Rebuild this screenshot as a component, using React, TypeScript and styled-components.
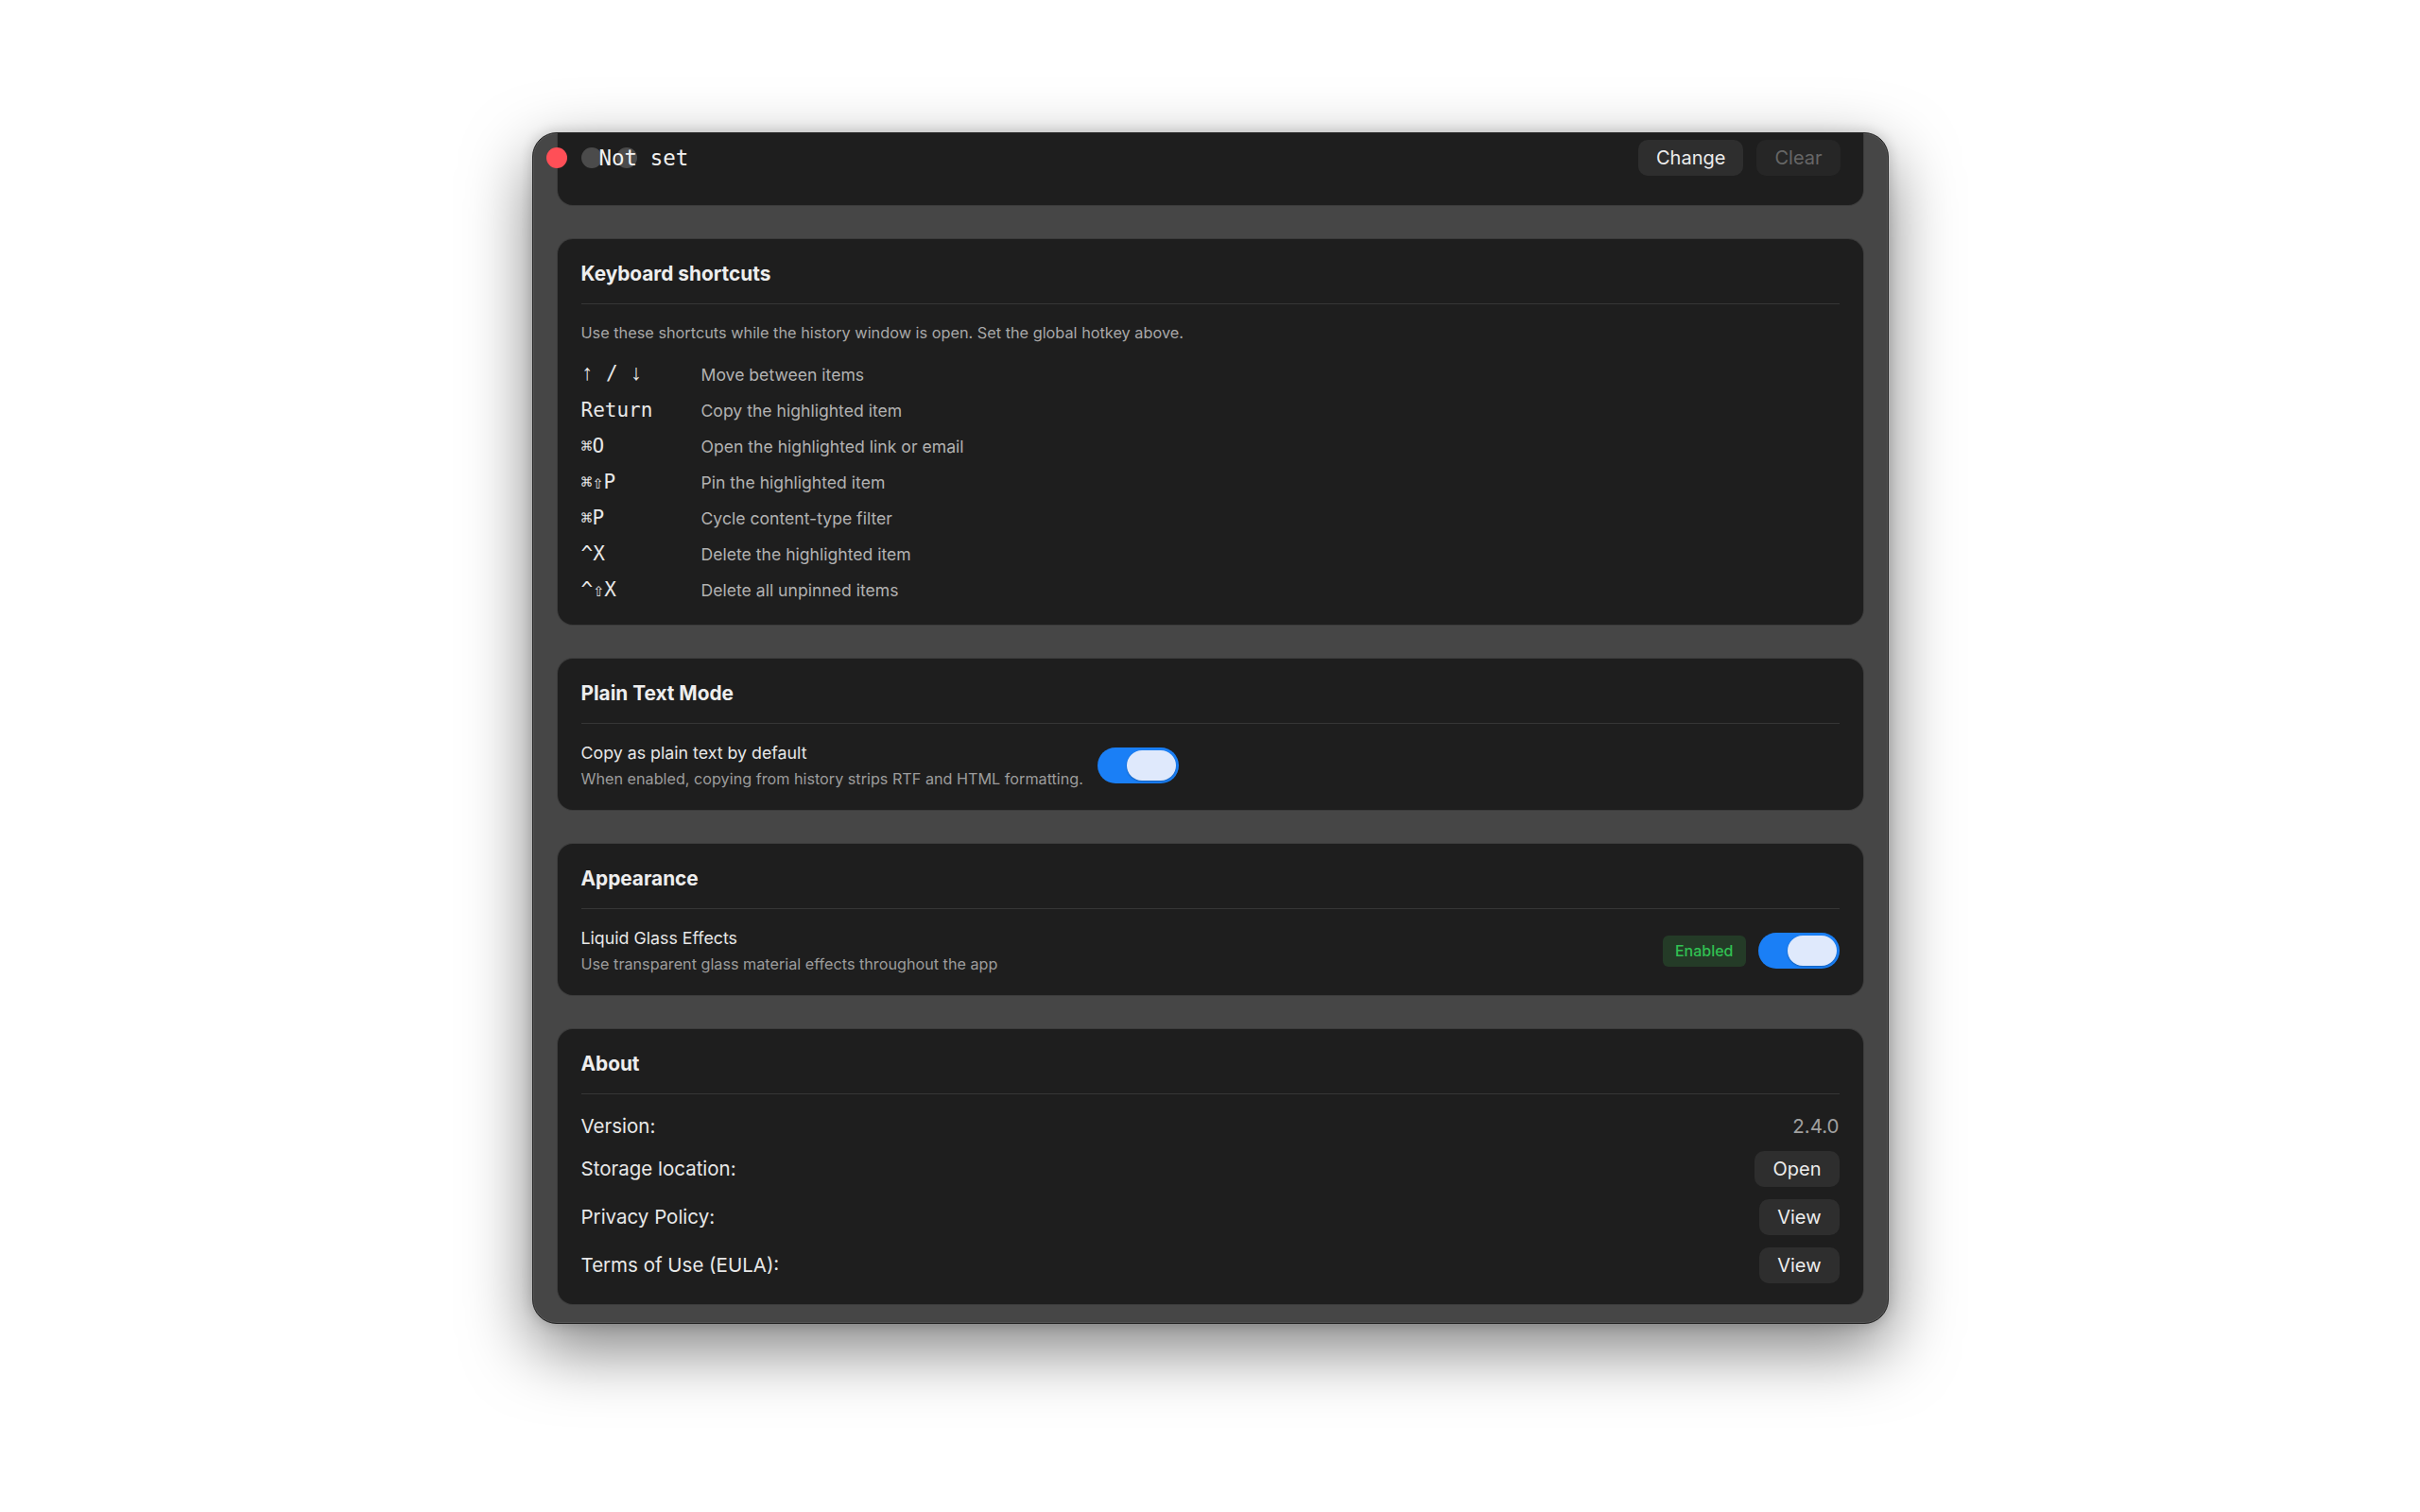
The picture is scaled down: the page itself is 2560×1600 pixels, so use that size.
import styled, { createGlobalStyle } from "styled-components";

const GlobalStyle = createGlobalStyle`
  html, body {
    margin: 0;
    padding: 0;
    background: #ffffff;
  }
  body {
    font-family: Inter, "Liberation Sans", sans-serif;
    -webkit-font-smoothing: antialiased;
  }
`;

const Page = styled.div`
  min-height: 1600px;
  box-sizing: border-box;
  display: flex;
  justify-content: center;
  align-items: flex-start;
  padding-top: 140px;
`;

const Window = styled.div`
  position: relative;
  width: 1435px;
  box-sizing: border-box;
  display: flex;
  flex-direction: column;
  gap: 36px;
  padding: 0 26px 20px;
  background: #464646;
  border: 1px solid #242424;
  border-radius: 26px;
  overflow: hidden;
  box-shadow: inset 0 0 0 1px rgba(255, 255, 255, 0.07),
    0 26px 70px rgba(0, 0, 0, 0.5), 0 0 14px rgba(0, 0, 0, 0.18);
`;

const TrafficLights = styled.div`
  position: absolute;
  top: 15px;
  left: 14px;
  display: flex;
  gap: 15px;
  z-index: 2;
`;

const Light = styled.div<{ $color: string }>`
  width: 22px;
  height: 22px;
  border-radius: 50%;
  background: ${(p) => p.$color};
`;

const Card = styled.section<{ $pb?: number }>`
  display: flex;
  flex-direction: column;
  padding: 24px 25px ${(p) => p.$pb ?? 22}px;
  background: #1e1e1e;
  border-radius: 16px;
  box-shadow: 0 0 0 1px rgba(0, 0, 0, 0.14);
`;

const HotkeyCard = styled(Card)`
  flex-direction: row;
  align-items: center;
  gap: 14px;
  padding: 7px 24px 31px 25px;
  border-radius: 0 0 16px 16px;
`;

const HotkeyValue = styled.div`
  flex: 1;
  margin-left: 19px;
  font: 400 22.5px/38px "DejaVu Sans Mono", "Liberation Mono", monospace;
  color: #f0f0f0;
`;

const Button = styled.button<{ $disabled?: boolean }>`
  height: 38px;
  padding: 0 19px;
  border: none;
  border-radius: 10px;
  background: ${(p) => (p.$disabled ? "#262626" : "#2e2e2e")};
  color: ${(p) => (p.$disabled ? "#666666" : "#ececec")};
  font: 400 20px Inter, "Liberation Sans", sans-serif;
  cursor: default;
`;

const CardTitle = styled.h2`
  margin: 0;
  font: 700 20.8px/26px Inter, "Liberation Sans", sans-serif;
  color: #eeeeee;
`;

const Divider = styled.div`
  height: 1px;
  margin-top: 18px;
  background: #363636;
`;

const Intro = styled.p`
  margin: 19px 0 0;
  font: 400 16.3px/22px Inter, "Liberation Sans", sans-serif;
  color: #a8a8a8;
`;

const KeyList = styled.div`
  margin-top: 14px;
  display: flex;
  flex-direction: column;
`;

const KeyRow = styled.div`
  display: grid;
  grid-template-columns: 127px 1fr;
  align-items: center;
  height: 38px;
`;

const Keys = styled.span`
  font: 400 21px "DejaVu Sans Mono", "Liberation Mono", monospace;
  color: #e8e8e8;
  white-space: pre;
`;

const Sym = styled.span`
  font-size: 0.95em;
`;

const Arrow = styled.span`
  font-family: "Liberation Mono", "DejaVu Sans Mono", monospace;
  font-size: 1.1em;
`;

const KeyDesc = styled.span`
  font: 400 17.6px Inter, "Liberation Sans", sans-serif;
  color: #b2b2b2;
`;

const SettingRow = styled.div<{ $spread?: boolean }>`
  margin-top: 19px;
  display: flex;
  align-items: center;
  justify-content: ${(p) => (p.$spread ? "space-between" : "flex-start")};
  gap: 15px;
`;

const SettingText = styled.div`
  display: flex;
  flex-direction: column;
  gap: 4px;
`;

const Label = styled.div`
  font: 400 17.8px/24px Inter, "Liberation Sans", sans-serif;
  color: #e8e8e8;
`;

const Sub = styled.div`
  font: 400 16.2px/22px Inter, "Liberation Sans", sans-serif;
  color: #9c9c9c;
`;

const Controls = styled.div`
  display: flex;
  align-items: center;
  gap: 13px;
`;

const Badge = styled.span`
  height: 33px;
  padding: 0 13px;
  display: flex;
  align-items: center;
  border-radius: 6px;
  background: #243b27;
  color: #31c152;
  font: 500 16px Inter, "Liberation Sans", sans-serif;
`;

const Toggle = styled.div<{ $on: boolean }>`
  width: 86px;
  height: 38px;
  box-sizing: border-box;
  padding: 3px;
  display: flex;
  justify-content: ${(p) => (p.$on ? "flex-end" : "flex-start")};
  border-radius: 19px;
  background: ${(p) => (p.$on ? "#1a7ff6" : "#3a3a3a")};

  &::after {
    content: "";
    width: 52px;
    height: 32px;
    border-radius: 16px;
    background: #dfe9fc;
    box-shadow: 0 1px 2px rgba(0, 0, 0, 0.25);
  }
`;

const AboutList = styled.div`
  margin-top: 21px;
  display: flex;
  flex-direction: column;
  gap: 13px;
`;

const AboutRow = styled.div`
  display: flex;
  align-items: center;
  justify-content: space-between;
  min-height: 26px;
`;

const AboutLabel = styled.span`
  font: 400 20.5px/26px Inter, "Liberation Sans", sans-serif;
  color: #e8e8e8;
`;

const AboutValue = styled.span`
  font: 400 20.5px/26px Inter, "Liberation Sans", sans-serif;
  color: #a0a0a0;
`;

const shortcuts = [
  { keys: <><Arrow>↑</Arrow> / <Arrow>↓</Arrow></>, desc: "Move between items" },
  { keys: <>Return</>, desc: "Copy the highlighted item" },
  { keys: <><Sym>⌘</Sym>O</>, desc: "Open the highlighted link or email" },
  { keys: <><Sym>⌘⇧</Sym>P</>, desc: "Pin the highlighted item" },
  { keys: <><Sym>⌘</Sym>P</>, desc: "Cycle content-type filter" },
  { keys: <>^X</>, desc: "Delete the highlighted item" },
  { keys: <>^<Sym>⇧</Sym>X</>, desc: "Delete all unpinned items" },
];

export default function App() {
  return (
    <>
      <GlobalStyle />
      <Page>
        <Window>
          <TrafficLights>
            <Light $color="#ff4f57" />
            <Light $color="rgba(255, 255, 255, 0.2)" />
            <Light $color="rgba(255, 255, 255, 0.2)" />
          </TrafficLights>

          <HotkeyCard>
            <HotkeyValue>Not set</HotkeyValue>
            <Button>Change</Button>
            <Button $disabled>Clear</Button>
          </HotkeyCard>

          <Card $pb={18}>
            <CardTitle>Keyboard shortcuts</CardTitle>
            <Divider />
            <Intro>
              Use these shortcuts while the history window is open. Set the
              global hotkey above.
            </Intro>
            <KeyList>
              {shortcuts.map((s) => (
                <KeyRow key={s.desc}>
                  <Keys>{s.keys}</Keys>
                  <KeyDesc>{s.desc}</KeyDesc>
                </KeyRow>
              ))}
            </KeyList>
          </Card>

          <Card>
            <CardTitle>Plain Text Mode</CardTitle>
            <Divider />
            <SettingRow>
              <SettingText>
                <Label>Copy as plain text by default</Label>
                <Sub>
                  When enabled, copying from history strips RTF and HTML
                  formatting.
                </Sub>
              </SettingText>
              <Toggle $on />
            </SettingRow>
          </Card>

          <Card>
            <CardTitle>Appearance</CardTitle>
            <Divider />
            <SettingRow $spread>
              <SettingText>
                <Label>Liquid Glass Effects</Label>
                <Sub>Use transparent glass material effects throughout the app</Sub>
              </SettingText>
              <Controls>
                <Badge>Enabled</Badge>
                <Toggle $on />
              </Controls>
            </SettingRow>
          </Card>

          <Card $pb={22}>
            <CardTitle>About</CardTitle>
            <Divider />
            <AboutList>
              <AboutRow>
                <AboutLabel>Version:</AboutLabel>
                <AboutValue>2.4.0</AboutValue>
              </AboutRow>
              <AboutRow>
                <AboutLabel>Storage location:</AboutLabel>
                <Button>Open</Button>
              </AboutRow>
              <AboutRow>
                <AboutLabel>Privacy Policy:</AboutLabel>
                <Button>View</Button>
              </AboutRow>
              <AboutRow>
                <AboutLabel>Terms of Use (EULA):</AboutLabel>
                <Button>View</Button>
              </AboutRow>
            </AboutList>
          </Card>
        </Window>
      </Page>
    </>
  );
}
